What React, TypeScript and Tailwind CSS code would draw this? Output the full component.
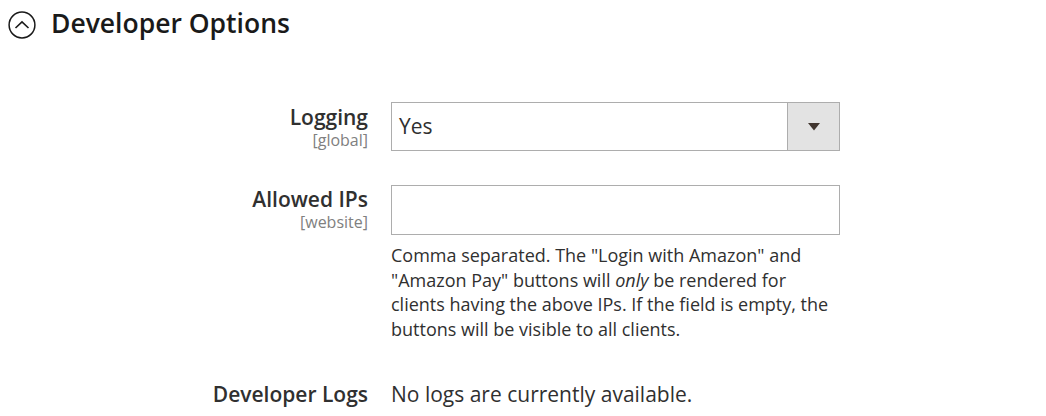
import React from "react";

export default function App() {
  return (
    <div className="w-[1046px] h-[416px] bg-white text-[#303030] overflow-hidden" style={{ fontFamily: "'Open Sans', 'Liberation Sans', sans-serif" }}>
      <div className="flex items-center pl-[8px] pt-[5px] h-[44px]">
        <svg width="28" height="28" viewBox="0 0 28 28" className="shrink-0 mt-[1px]">
          <circle cx="14" cy="14" r="12.9" fill="none" stroke="#1a1a1a" strokeWidth="1.5" />
          <polyline points="7.5,17 14,10.8 20.5,17" fill="none" stroke="#1a1a1a" strokeWidth="1.6" strokeLinejoin="miter" />
        </svg>
        <h2 className="ml-[15px] text-[26.5px] font-semibold leading-[36px] text-[#1a1a1a] -mt-[3px]">Developer Options</h2>
      </div>

      <div className="mt-[58px] grid grid-cols-[368px_449px] gap-x-[23px]">
        <div className="text-right pt-[2px]">
          <div className="text-[21px] font-semibold leading-[27px]">Logging</div>
          <div className="text-[16px] leading-[18px] text-[#808080]">[global]</div>
        </div>
        <div className="h-[49px] border-[1.5px] border-[#adadad] flex items-stretch">
          <div className="flex-1 flex items-center pl-[7px] pt-[1px] text-[21px]">Yes</div>
          <div className="w-[52px] bg-[#e3e3e3] border-l-[1.5px] border-[#adadad] flex items-center justify-center">
            <svg width="12" height="8" viewBox="0 0 12 8">
              <polygon points="0,0 12,0 6,7.5" fill="#41362f" />
            </svg>
          </div>
        </div>

        <div className="mt-[34px] text-right pt-[1px]">
          <div className="text-[21px] font-semibold leading-[27px]">Allowed IPs</div>
          <div className="text-[16px] leading-[19px] text-[#808080]">[website]</div>
        </div>
        <div className="mt-[34px]">
          <div className="h-[50px] border-[1.5px] border-[#adadad]" />
          <p className="mt-[8px] text-[18px] leading-[24.5px]">
            Comma separated. The "Login with Amazon" and
            <br />
            "Amazon Pay" buttons will <em>only</em> be rendered for
            <br />
            clients having the above IPs. If the field is empty, the
            <br />
            buttons will be visible to all clients.
          </p>
        </div>

        <div className="mt-[40px] text-right text-[21px] font-semibold leading-[27px]">Developer Logs</div>
        <div className="mt-[40px] text-[21px] leading-[27px]">No logs are currently available.</div>
      </div>
    </div>
  );
}
